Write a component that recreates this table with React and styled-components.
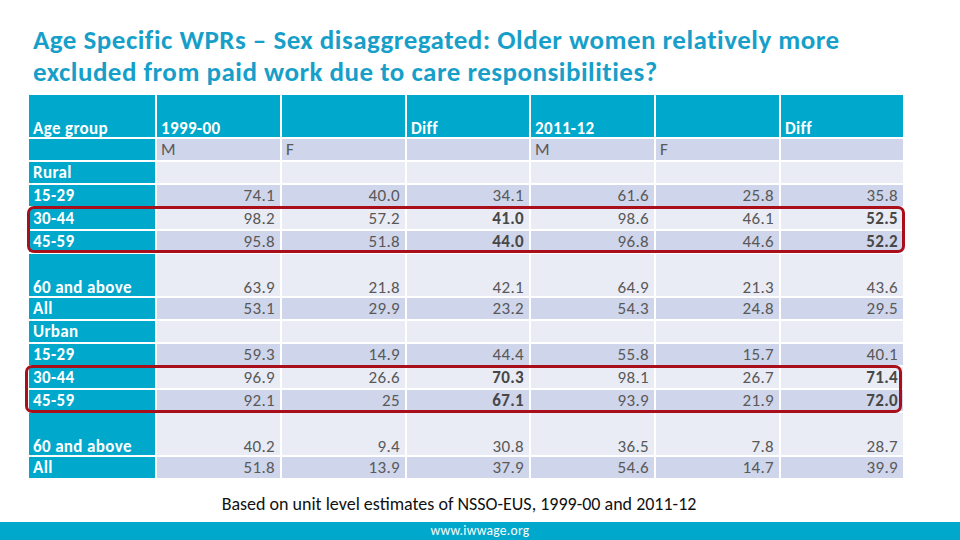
import React from "react";
import styled, { createGlobalStyle } from "styled-components";

const teal = "#00a8cc";

const rows = [
  { label: "Rural", values: null, shade: "light" },
  { label: "15-29", values: ["74.1", "40.0", "34.1", "61.6", "25.8", "35.8"], shade: "dark" },
  { label: "30-44", values: ["98.2", "57.2", "41.0", "98.6", "46.1", "52.5"], shade: "light", bold: true },
  { label: "45-59", values: ["95.8", "51.8", "44.0", "96.8", "44.6", "52.2"], shade: "dark", bold: true },
  { label: "60 and above", values: ["63.9", "21.8", "42.1", "64.9", "21.3", "43.6"], shade: "light", tall: true },
  { label: "All", values: ["53.1", "29.9", "23.2", "54.3", "24.8", "29.5"], shade: "dark" },
  { label: "Urban", values: null, shade: "light" },
  { label: "15-29", values: ["59.3", "14.9", "44.4", "55.8", "15.7", "40.1"], shade: "dark" },
  { label: "30-44", values: ["96.9", "26.6", "70.3", "98.1", "26.7", "71.4"], shade: "light", bold: true },
  { label: "45-59", values: ["92.1", "25", "67.1", "93.9", "21.9", "72.0"], shade: "dark", bold: true },
  { label: "60 and above", values: ["40.2", "9.4", "30.8", "36.5", "7.8", "28.7"], shade: "light", tall: true },
  { label: "All", values: ["51.8", "13.9", "37.9", "54.6", "14.7", "39.9"], shade: "dark" },
];

const colWidths = [126, 123, 123, 122, 123, 123, 122];
const diffCols = [2, 5];

const GlobalStyle = createGlobalStyle`
  html, body {
    margin: 0;
    padding: 0;
    background: #ffffff;
  }
  body {
    font-family: Carlito, "Open Sans", "Liberation Sans", sans-serif;
  }
`;

const Slide = styled.div`
  width: 960px;
  height: 540px;
  display: flex;
  flex-direction: column;
  overflow: hidden;
  background: #ffffff;
`;

const Title = styled.h1`
  margin: 24px 0 0 33px;
  font-size: 27px;
  line-height: 32px;
  font-weight: 700;
  color: #179fca;
  letter-spacing: 0.5px;
  white-space: nowrap;
`;

const TableWrap = styled.div`
  position: relative;
  margin: 5px 0 0 27px;
  width: 878px;
`;

const Table = styled.table`
  border-collapse: separate;
  border-spacing: 2px;
  table-layout: fixed;
  width: 878px;
  font-size: 17px;
  letter-spacing: 0.35px;
`;

const Row = styled.tr`
  height: ${(p) => (p.$tall ? 42 : 21)}px;
`;

const Cell = styled.td`
  padding: 0 4px;
  vertical-align: bottom;
  line-height: ${(p) => (p.$tall ? 17 : 20)}px;
  white-space: nowrap;
`;

const HeadCell = styled(Cell)`
  background: ${teal};
  color: #ffffff;
  font-weight: 700;
`;

const SubCell = styled(Cell)`
  background: ${(p) => (p.$label ? teal : "#cfd5ea")};
  color: #595959;
`;

const LabelCell = styled(Cell)`
  background: ${teal};
  color: #ffffff;
  font-weight: 700;
`;

const NumCell = styled(Cell)`
  background: ${(p) => (p.$shade === "dark" ? "#cfd5ea" : "#e9ebf5")};
  color: ${(p) => (p.$bold ? "#474747" : "#595959")};
  font-weight: ${(p) => (p.$bold ? 700 : 400)};
  text-align: right;
  padding-right: 5px;
`;

const Ring = styled.div`
  position: absolute;
  left: ${(p) => p.$left}px;
  top: ${(p) => p.$top}px;
  width: ${(p) => p.$width}px;
  height: ${(p) => p.$height}px;
  border: 3px solid #a80f1b;
  border-radius: 7px;
  box-sizing: border-box;
  pointer-events: none;
`;

const Note = styled.p`
  margin: 13px 0 0 0;
  padding-right: 42px;
  text-align: center;
  font-size: 18px;
  line-height: 22px;
  color: #111111;
`;

const Footer = styled.div`
  margin-top: auto;
  height: 18px;
  background: ${teal};
  color: #ffffff;
  font-size: 13.5px;
  line-height: 18px;
  text-align: center;
  letter-spacing: 0.3px;
`;

function App() {
  return (
    <Slide>
      <GlobalStyle />
      <Title>
        Age Specific WPRs – Sex disaggregated: Older women relatively more
        <br />
        excluded from paid work due to care responsibilities?
      </Title>
      <TableWrap>
        <Table>
          <colgroup>
            {colWidths.map((w, i) => (
              <col key={i} style={{ width: w }} />
            ))}
          </colgroup>
          <tbody>
            <Row $tall>
              <HeadCell $tall>Age group</HeadCell>
              <HeadCell $tall>1999-00</HeadCell>
              <HeadCell $tall />
              <HeadCell $tall>Diff</HeadCell>
              <HeadCell $tall>2011-12</HeadCell>
              <HeadCell $tall />
              <HeadCell $tall>Diff</HeadCell>
            </Row>
            <Row>
              <SubCell $label />
              <SubCell>M</SubCell>
              <SubCell>F</SubCell>
              <SubCell />
              <SubCell>M</SubCell>
              <SubCell>F</SubCell>
              <SubCell />
            </Row>
            {rows.map((r, i) => (
              <Row key={i} $tall={r.tall}>
                <LabelCell $tall={r.tall}>{r.label}</LabelCell>
                {(r.values || ["", "", "", "", "", ""]).map((v, j) => (
                  <NumCell
                    key={j}
                    $tall={r.tall}
                    $shade={r.shade}
                    $bold={r.bold && diffCols.includes(j)}
                  >
                    {v}
                  </NumCell>
                ))}
              </Row>
            ))}
          </tbody>
        </Table>
        <Ring $left={0} $top={113} $width={878} $height={47} />
        <Ring $left={-2} $top={272} $width={877} $height={48} />
      </TableWrap>
      <Note>Based on unit level estimates of NSSO-EUS, 1999-00 and 2011-12</Note>
      <Footer>www.iwwage.org</Footer>
    </Slide>
  );
}

export default App;
